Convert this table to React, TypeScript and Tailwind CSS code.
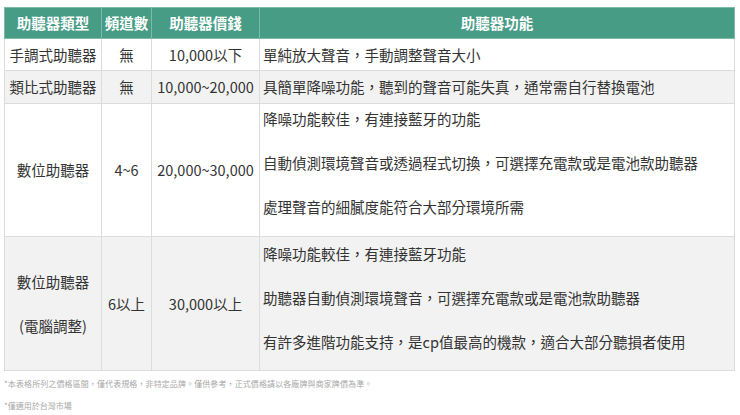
const font = { fontFamily: '"Noto Sans CJK TC", "Noto Sans", sans-serif' };

const rows3 = [
  "降噪功能較佳，有連接藍牙的功能",
  "自動偵測環境聲音或透過程式切換，可選擇充電款或是電池款助聽器",
  "處理聲音的細膩度能符合大部分環境所需",
];

const rows4 = [
  "降噪功能較佳，有連接藍牙功能",
  "助聽器自動偵測環境聲音，可選擇充電款或是電池款助聽器",
  "有許多進階功能支持，是cp值最高的機款，適合大部分聽損者使用",
];

export default function App() {
  const th = "border border-[#7dbaa9] text-white font-bold text-[14.5px] leading-[22px] text-center h-[31px] p-0";
  const td = "border border-[#dcdcdc] text-[14.5px] leading-[22px] text-[#333] p-0";
  return (
    <div className="w-[740px] h-[415px] bg-white overflow-hidden pt-[7px] pl-[4px]" style={font}>
      <table className="border-collapse table-fixed w-[731px]">
        <colgroup>
          <col className="w-[97px]" />
          <col className="w-[50px]" />
          <col className="w-[108px]" />
          <col />
        </colgroup>
        <thead>
          <tr className="bg-[#479c86]">
            <th className={th}>助聽器類型</th>
            <th className={th}>頻道數</th>
            <th className={th}>助聽器價錢</th>
            <th className={th}>助聽器功能</th>
          </tr>
        </thead>
        <tbody>
          <tr className="bg-white h-[32px]">
            <td className={`${td} text-center`}>手調式助聽器</td>
            <td className={`${td} text-center`}>無</td>
            <td className={`${td} text-center`}>10,000以下</td>
            <td className={`${td} pl-[3px]`}>單純放大聲音，手動調整聲音大小</td>
          </tr>
          <tr className="bg-[#f2f2f2] h-[33px]">
            <td className={`${td} text-center`}>類比式助聽器</td>
            <td className={`${td} text-center`}>無</td>
            <td className={`${td} text-center whitespace-nowrap`}>10,000~20,000</td>
            <td className={`${td} pl-[3px]`}>具簡單降噪功能，聽到的聲音可能失真，通常需自行替換電池</td>
          </tr>
          <tr className="bg-white">
            <td className={`${td} text-center align-middle`}>數位助聽器</td>
            <td className={`${td} text-center align-middle`}>4~6</td>
            <td className={`${td} text-center align-middle whitespace-nowrap`}>20,000~30,000</td>
            <td className={`${td} pl-[3px] align-top`}>
              <div className="flex flex-col gap-[22px] pt-[4px] pb-[18px]">
                {rows3.map((t) => (
                  <p key={t}>{t}</p>
                ))}
              </div>
            </td>
          </tr>
          <tr className="bg-[#f2f2f2]">
            <td className={`${td} text-center align-middle`}>
              <div className="flex flex-col gap-[22px]">
                <span>數位助聽器</span>
                <span>(電腦調整)</span>
              </div>
            </td>
            <td className={`${td} text-center align-middle`}>6以上</td>
            <td className={`${td} text-center align-middle`}>30,000以上</td>
            <td className={`${td} pl-[3px] align-top`}>
              <div className="flex flex-col gap-[22px] pt-[6px] pb-[17px]">
                {rows4.map((t) => (
                  <p key={t}>{t}</p>
                ))}
              </div>
            </td>
          </tr>
        </tbody>
      </table>
      <div className="text-[8px] leading-[12px] text-[#a8a8a8] mt-[7px] tracking-[0.1px]">
        *本表格所列之價格區間，僅代表規格，非特定品牌。僅供參考，正式價格請以各廠牌與商家牌價為準。
      </div>
      <div className="text-[8px] leading-[12px] text-[#a8a8a8] mt-[10px]">*僅適用於台灣市場</div>
    </div>
  );
}
